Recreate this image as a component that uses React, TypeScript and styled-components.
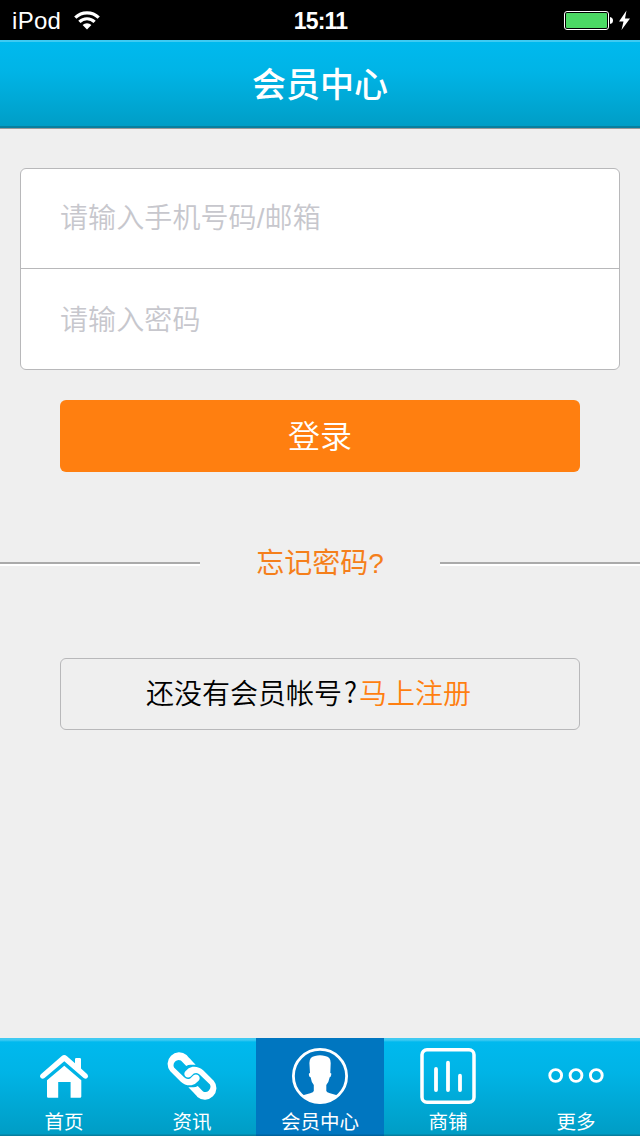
import React from "react";
import styled, { createGlobalStyle } from "styled-components";

const GlobalStyle = createGlobalStyle`
  * { box-sizing: border-box; }
  body {
    margin: 0;
    background: #efefef;
    font-family: "Liberation Sans", "Noto Sans CJK SC", sans-serif;
  }
`;

const Screen = styled.div`
  width: 640px;
  height: 1136px;
  display: flex;
  flex-direction: column;
  background: #efefef;
  overflow: hidden;
`;

const StatusBar = styled.div`
  height: 40px;
  flex: none;
  display: grid;
  grid-template-columns: 1fr auto 1fr;
  align-items: center;
  padding: 2px 9px 0 12px;
  background: #000;
  color: #fff;
  font-size: 24px;
  line-height: 38px;
`;

const Carrier = styled.div`
  display: flex;
  align-items: center;
  gap: 13px;
  letter-spacing: 0.3px;
  svg { display: block; margin-top: -2px; }
`;

const Clock = styled.div`
  font-weight: 700;
  font-size: 23px;
  letter-spacing: -0.8px;
  margin-right: 2px;
`;

const Power = styled.div`
  display: flex;
  justify-content: flex-end;
  svg { display: block; }
`;

const Header = styled.header`
  height: 89px;
  flex: none;
  display: flex;
  align-items: center;
  justify-content: center;
  background: linear-gradient(#00b9ee, #00b4e6 35%, #009dc5);
  border-top: 2px solid #3fcaf2;
  border-bottom: 1px solid #999;
  box-shadow: inset 0 -2px 0 #087f9f;
`;

const Title = styled.h1`
  margin: 0;
  color: #fff;
  font-size: 34px;
  font-weight: 500;
  line-height: 50px;
`;

const Content = styled.main`
  flex: 1;
  display: flex;
  flex-direction: column;
  padding-top: 39px;
`;

const Fields = styled.div`
  height: 202px;
  margin: 0 20px;
  background: #fff;
  border: 1px solid #b8b8ba;
  border-radius: 6px;
`;

const Field = styled.input<{ $divided?: boolean }>`
  display: block;
  width: 100%;
  height: 100px;
  padding: ${(p) => (p.$divided ? "0 39px" : "4px 39px 0")};
  border: 0;
  border-bottom: ${(p) => (p.$divided ? "1px solid #b8b8ba" : "0")};
  background: transparent;
  outline: none;
  font-family: "Liberation Sans", "Noto Sans CJK SC", sans-serif;
  font-size: 28px;
  font-weight: 350;
  letter-spacing: 0.1px;
  &::placeholder { color: #c7c7cd; opacity: 1; }
`;

const LoginButton = styled.button`
  height: 72px;
  margin: 30px 60px 0;
  padding: 0 0 4px;
  border: 0;
  border-radius: 6px;
  background: #ff7f10;
  color: #fff;
  font-family: "Liberation Sans", "Noto Sans CJK SC", sans-serif;
  font-size: 32px;
  font-weight: 350;
`;

const Forgot = styled.div`
  height: 40px;
  margin-top: 72px;
  display: grid;
  grid-template-columns: 200px 240px 200px;
  align-items: center;
  text-align: center;
`;

const Rule = styled.span`
  height: 4px;
  border-top: 2px solid #aaa;
  border-bottom: 2px solid #fff;
`;

const ForgotLink = styled.a`
  color: #f57f1b;
  font-size: 28px;
  line-height: 40px;
`;

const Register = styled.div`
  height: 72px;
  margin: 74px 60px 0;
  display: flex;
  align-items: center;
  padding: 2px 0 0 85px;
  border: 1px solid #b8b8ba;
  border-radius: 6px;
  font-size: 28px;
  font-weight: 350;
  line-height: 40px;
  color: #000;
`;

const QuestionMark = styled.span`
  width: 17px;
  padding-bottom: 8px;
  text-align: center;
  font-family: "Noto Sans CJK SC", sans-serif;
`;

const RegisterLink = styled.a`
  color: #ff7f10;
`;

const TabBar = styled.nav`
  height: 98px;
  flex: none;
  display: flex;
  background: linear-gradient(#3fcaf2 0, #3fcaf2 2px, #00b9ee 4px, #00b4e6 35%, #009dc5 96px, #087f9f 97px);
`;

const Tab = styled.a<{ $active?: boolean }>`
  flex: 1;
  display: flex;
  flex-direction: column;
  align-items: center;
  padding-top: 10px;
  color: #fff;
  background: ${(p) => (p.$active ? "linear-gradient(#0076c0 96px, #00649f 97px)" : "none")};
  svg { display: block; flex: none; }
`;

const TabLabel = styled.span`
  margin-top: 3px;
  font-size: 19.5px;
  line-height: 30px;
`;

const WifiIcon = () => (
  <svg width="26" height="19" viewBox="0 0 26 19" fill="none" stroke="#fff" strokeWidth="3.2">
    <path d="M1.3 6.7a16.5 16.5 0 0 1 23.4 0" />
    <path d="M5.4 10.9a10.7 10.7 0 0 1 15.2 0" />
    <path d="M8.6 14.1a6.2 6.2 0 0 1 8.8 0L13 18.5z" fill="#fff" stroke="none" />
  </svg>
);

const BatteryIcon = () => (
  <svg width="67" height="22" viewBox="0 0 67 22">
    <rect x="0.5" y="1.5" width="44" height="18" rx="2.5" fill="none" stroke="#fff" />
    <rect x="2" y="3" width="41" height="15" rx="1" fill="#4cd964" />
    <path d="M46 7q3 .5 3 3.5t-3 3.5z" fill="#fff" />
    <path d="M62.5 .5 55 11.5h4.5L57.5 20 66 8.5H61z" fill="#fff" />
  </svg>
);

const HomeIcon = () => (
  <svg width="56" height="56" viewBox="0 0 56 56" fill="#fff">
    <path d="M28.3 7Q29.5 7 31 8.3L39 15.3V11.2Q39 10 40.2 10H43.8Q45 10 45 11.2V20.6L51.3 26.2Q53 28 51.3 30.1Q49.6 31.5 47.7 30L28.3 13.3 8.5 30Q6.6 31.5 4.9 30.1Q3.1 28 4.9 26.2L25.5 8.3Q27 7 28.3 7Z" />
    <path d="M28.3 17.7 45.3 32.3V48.5Q45.3 49.7 44.1 49.7H34.6V34H22.2V49.7H12.3Q11 49.7 11 48.5V32.3Z" />
  </svg>
);

const loop =
  "M28.7 17.2H26.5Q24.3 17.3 22.5 18.4L17.4 13.2A5 5 0 0 0 10.8 19.8L20.5 29.3Q23.3 32 26.3 30.3L29.5 27.3Q32 25.6 34.5 27.7Q36.3 30.2 34.3 32.6Q31.5 36 27.5 36.8Q21.5 37.4 17.3 33.4L7.2 23.4A11 11 0 0 1 22.8 8Q23.5 9 28.7 14.3L31.5 17.2Z";

const LinkIcon = () => (
  <svg width="56" height="56" viewBox="1.2 1.2 53.6 53.6" fill="#fff">
    <path d={loop} />
    <path d={loop} transform="rotate(180 28 28)" />
  </svg>
);

const MemberIcon = () => (
  <svg width="56" height="56" viewBox="0 0 56 56">
    <circle cx="28" cy="28" r="26.6" fill="none" stroke="#fff" strokeWidth="2.8" />
    <path fill="#fff" d="M18 25 17.4 15Q17.5 8.5 23 8Q28 6.7 33 8Q38.7 8.5 38.7 15L38.3 25Q39.9 25 39.2 27Q38.7 29.3 37.7 29.3Q36.9 34 34.3 37V43Q34.6 44.6 38 45.3L45 47.3Q38 55 28 55.5Q18 55 11 47.3L18.2 45.3Q21.5 44.6 21.8 43V37Q19.3 34 18.6 29.3Q17.3 29.3 16.9 27Q16.4 25 18 25Z" />
  </svg>
);

const ShopIcon = () => (
  <svg width="56" height="56" viewBox="0 0 56 56" fill="none" stroke="#fff" strokeWidth="3.8" strokeLinecap="round">
    <rect x="2" y="1.8" width="52" height="52.4" rx="5" strokeWidth="3.5" />
    <path d="M16 21V42M28 14.7V42M40 27.7V42" />
  </svg>
);

const MoreIcon = () => (
  <svg width="56" height="56" viewBox="0 0 56 56" fill="none" stroke="#fff" strokeWidth="2.9">
    <circle cx="7.7" cy="27.5" r="5.9" />
    <circle cx="28" cy="27.5" r="5.9" />
    <circle cx="48.3" cy="27.5" r="5.9" />
  </svg>
);

const tabs = [
  { label: "首页", Icon: HomeIcon },
  { label: "资讯", Icon: LinkIcon },
  { label: "会员中心", Icon: MemberIcon, active: true },
  { label: "商铺", Icon: ShopIcon },
  { label: "更多", Icon: MoreIcon },
];

export default function App() {
  return (
    <Screen>
      <GlobalStyle />
      <StatusBar>
        <Carrier>iPod<WifiIcon /></Carrier>
        <Clock>15:11</Clock>
        <Power><BatteryIcon /></Power>
      </StatusBar>
      <Header><Title>会员中心</Title></Header>
      <Content>
        <Fields>
          <Field $divided placeholder="请输入手机号码/邮箱" />
          <Field type="password" placeholder="请输入密码" />
        </Fields>
        <LoginButton>登录</LoginButton>
        <Forgot>
          <Rule />
          <ForgotLink>忘记密码?</ForgotLink>
          <Rule />
        </Forgot>
        <Register>
          还没有会员帐号<QuestionMark>?</QuestionMark>
          <RegisterLink>马上注册</RegisterLink>
        </Register>
      </Content>
      <TabBar>
        {tabs.map(({ label, Icon, active }) => (
          <Tab key={label} $active={active}>
            <Icon />
            <TabLabel>{label}</TabLabel>
          </Tab>
        ))}
      </TabBar>
    </Screen>
  );
}
